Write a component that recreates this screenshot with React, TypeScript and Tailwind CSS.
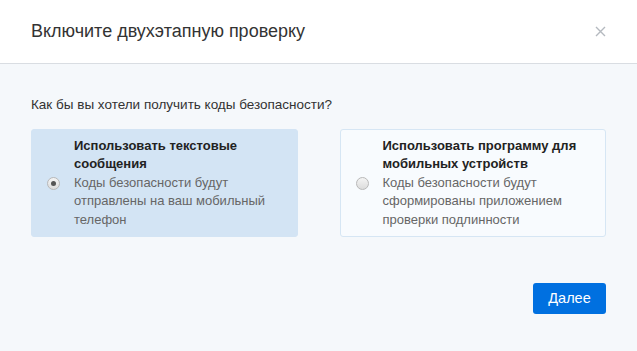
export default function App() {
  return (
    <div className="w-[637px] h-[351px] flex flex-col bg-[#f5f8fb] font-['Liberation_Sans',Arial,sans-serif] text-[#333]">
      <div className="h-[64px] shrink-0 bg-white border-b border-[#d9dde2] flex items-center justify-between pl-[31px] pr-[30px]">
        <h1 className="text-[18px] text-[#333]">Включите двухэтапную проверку</h1>
        <button className="text-[#b4b9bf] w-[14px] h-[14px] flex items-center justify-center" aria-label="Закрыть">
          <svg width="11" height="11" viewBox="0 0 11 11" stroke="currentColor" strokeWidth="1.4">
            <path d="M1 1L10 10M10 1L1 10" />
          </svg>
        </button>
      </div>
      <div className="flex-1 px-[31px] pt-[33px]">
        <p className="text-[13.5px] leading-[16px]">Как бы вы хотели получить коды безопасности?</p>
        <div className="mt-[16px] flex gap-[42px]">
          <Option
            selected
            title="Использовать текстовые сообщения"
            desc="Коды безопасности будут отправлены на ваш мобильный телефон"
          />
          <Option
            title="Использовать программу для мобильных устройств"
            desc="Коды безопасности будут сформированы приложением проверки подлинности"
          />
        </div>
        <div className="mt-[46px] flex justify-end">
          <button className="w-[73px] h-[31px] rounded-[3px] bg-[#0070e0] text-white text-[14.5px]">Далее</button>
        </div>
      </div>
    </div>
  );
}

function Option({ selected, title, desc }: { selected?: boolean; title: string; desc: string }) {
  return (
    <div
      className={
        'w-[267px] h-[108px] rounded-[3px] border flex items-center pl-[15px] pr-[16px] ' +
        (selected ? 'bg-[#d3e4f4] border-[#d3e4f4]' : 'bg-[#f8fbfe] border-[#d6e6f4]')
      }
    >
      <span className="w-[13px] h-[13px] rounded-full border border-[#b8b8b8] bg-gradient-to-b from-[#f4f4f4] to-[#dcdcdc] flex items-center justify-center shrink-0">
        {selected && <span className="w-[5px] h-[5px] rounded-full bg-[#555]" />}
      </span>
      <div className="ml-[14px] text-[13px] leading-[18.5px]">
        <p className="font-bold text-[#222]">{title}</p>
        <p className="text-[#666]">{desc}</p>
      </div>
    </div>
  );
}
